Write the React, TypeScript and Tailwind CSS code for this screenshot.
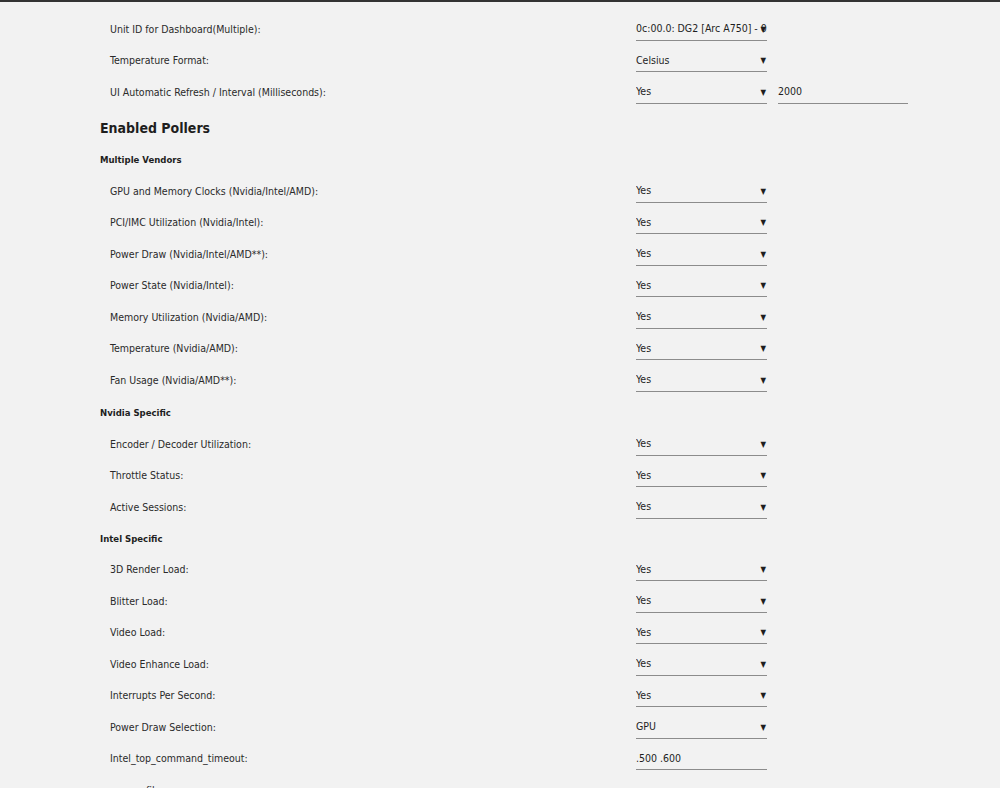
import type { ReactNode } from "react";

type Field =
  | { kind: "select"; label: string; value: string; extra?: string }
  | { kind: "input"; label: string; value: string };

type Block = { title?: string; heading?: string; gap?: string; fields: Field[] };

const yes = (label: string): Field => ({ kind: "select", label, value: "Yes" });

const BLOCKS: Block[] = [
  {
    fields: [
      {
        kind: "select",
        label: "Unit ID for Dashboard(Multiple):",
        value: "0c:00.0: DG2 [Arc A750] - 0x56a1",
      },
      { kind: "select", label: "Temperature Format:", value: "Celsius" },
      {
        kind: "select",
        label: "UI Automatic Refresh / Interval (Milliseconds):",
        value: "Yes",
        extra: "2000",
      },
    ],
  },
  {
    heading: "Enabled Pollers",
    title: "Multiple Vendors",
    fields: [
      yes("GPU and Memory Clocks (Nvidia/Intel/AMD):"),
      yes("PCI/IMC Utilization (Nvidia/Intel):"),
      yes("Power Draw (Nvidia/Intel/AMD**):"),
      yes("Power State (Nvidia/Intel):"),
      yes("Memory Utilization (Nvidia/AMD):"),
      yes("Temperature (Nvidia/AMD):"),
      yes("Fan Usage (Nvidia/AMD**):"),
    ],
  },
  {
    title: "Nvidia Specific",
    gap: "mt-[1px]",
    fields: [
      yes("Encoder / Decoder Utilization:"),
      yes("Throttle Status:"),
      yes("Active Sessions:"),
    ],
  },
  {
    title: "Intel Specific",
    gap: "-mt-[0.5px]",
    fields: [
      yes("3D Render Load:"),
      yes("Blitter Load:"),
      yes("Video Load:"),
      yes("Video Enhance Load:"),
      yes("Interrupts Per Second:"),
      { kind: "select", label: "Power Draw Selection:", value: "GPU" },
      { kind: "input", label: "Intel_top_command_timeout:", value: ".500 .600" },
      { kind: "input", label: "source_file:", value: "" },
    ],
  },
];

function Select({ value }: { value: string }) {
  return (
    <div className="relative flex h-[22px] w-[131px] items-center border-b border-[#8c8c8c]">
      <span className="block w-full overflow-hidden whitespace-nowrap">{value}</span>
      {/* dropdown caret sits on top of long values */}
      <span className="absolute right-[1px] top-[4px] text-[8px] leading-[14px]">▼</span>
    </div>
  );
}

function TextBox({ value, width }: { value: string; width: string }) {
  return (
    <div className={`flex h-[22px] items-center border-b border-[#8c8c8c] ${width}`}>
      <span className="whitespace-nowrap">{value}</span>
    </div>
  );
}

function Row({ label, children }: { label: string; children: ReactNode }) {
  return (
    <div className="flex h-[31.5px] items-center text-[10.5px]">
      <div className="w-[536px] pl-[10px] text-[#2a2a2a]">{label}</div>
      <div className="flex items-center gap-[11px]">{children}</div>
    </div>
  );
}

export default function App() {
  return (
    <div
      className="h-[788px] overflow-hidden border-t-2 border-[#333] bg-[#f2f2f2] pl-[100px] pt-[12px] text-[#1e1e1e]"
      style={{ fontFamily: '"DejaVu Sans Condensed", "DejaVu Sans", sans-serif' }}
    >
      {BLOCKS.map((b, i) => (
        <div key={i}>
          {b.heading && (
            <div className="mt-[4.5px] flex h-[31.5px] items-center text-[14px] font-bold">
              {b.heading}
            </div>
          )}
          {b.title && (
            <div className={`flex h-[31.5px] items-center text-[9.5px] font-bold ${b.gap ?? ""}`}>
              {b.title}
            </div>
          )}
          {b.fields.map((f) => (
            <Row key={f.label} label={f.label}>
              {f.kind === "select" ? (
                <>
                  <Select value={f.value} />
                  {f.extra && <TextBox value={f.extra} width="w-[130px]" />}
                </>
              ) : (
                <TextBox value={f.value} width="w-[131px]" />
              )}
            </Row>
          ))}
        </div>
      ))}
    </div>
  );
}
